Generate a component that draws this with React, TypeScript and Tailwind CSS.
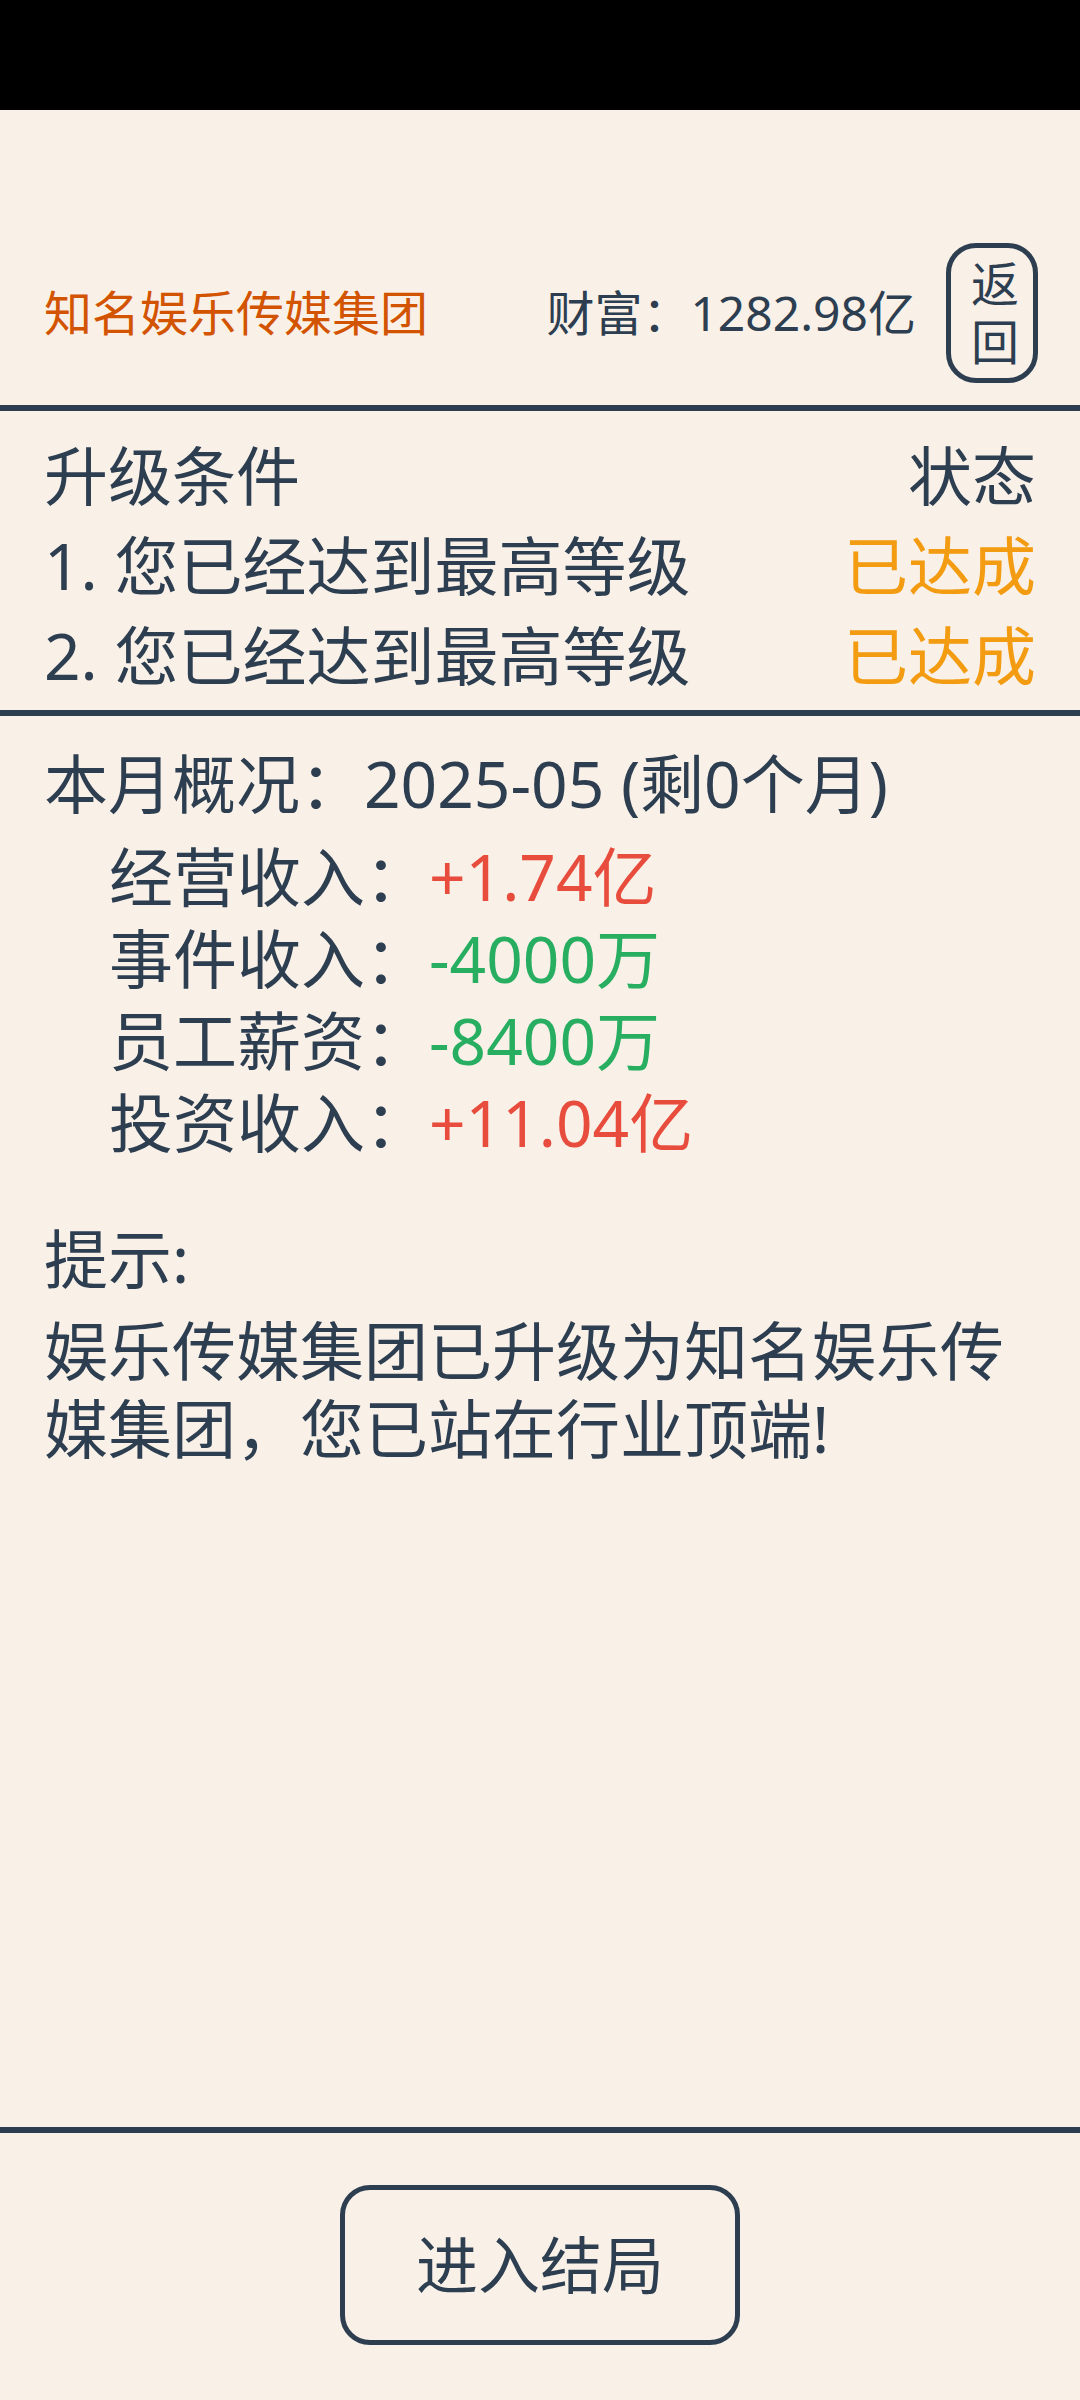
const rows = [
  { label: "经营收入：", value: "+1.74亿", up: true },
  { label: "事件收入：", value: "-4000万", up: false },
  { label: "员工薪资：", value: "-8400万", up: false },
  { label: "投资收入：", value: "+11.04亿", up: true },
];

export default function App() {
  return (
    <div
      className="flex h-[2400px] w-[1080px] flex-col bg-[#f9f0e8] text-[#2c3e50]"
      style={{ fontFamily: '"Noto Sans", "Noto Sans CJK SC", sans-serif' }}
    >
      {/* status bar */}
      <div className="h-[110px] bg-black" />

      {/* header */}
      <div className="flex h-[295px] items-end px-[44px] pb-[22px]">
        <div className="flex w-full items-center">
          <div className="flex-1 text-[48px] leading-none text-[#d35400]">知名娱乐传媒集团</div>
          <div className="text-[48px] leading-none">财富：1282.98亿</div>
          <button className="ml-[30px] mr-[-2px] flex h-[140px] w-[92px] items-center justify-center rounded-[30px] border-[5px] border-[#2c3e50]">
            <span className="pt-[10px] text-[48px] leading-none tracking-[10px] [writing-mode:vertical-rl]">返回</span>
          </button>
        </div>
      </div>

      <div className="h-[6px] bg-[#2c3e50]" />

      {/* upgrade conditions */}
      <div className="px-[44px] pb-[9px] pt-[20px] text-[64px] leading-[90px]">
        <div className="flex justify-between">
          <span>升级条件</span>
          <span>状态</span>
        </div>
        <div className="flex justify-between">
          <span>1. 您已经达到最高等级</span>
          <span className="text-[#f39c12]">已达成</span>
        </div>
        <div className="flex justify-between">
          <span>2. 您已经达到最高等级</span>
          <span className="text-[#f39c12]">已达成</span>
        </div>
      </div>

      <div className="h-[6px] bg-[#2c3e50]" />

      {/* monthly overview */}
      <div className="flex-1 px-[44px] pt-[27px] text-[64px] leading-[82px]">
        <div>本月概况：2025-05 (剩0个月)</div>
        <div className="mt-[11px] pl-[65px]">
          {rows.map((r) => (
            <div key={r.label}>
              {r.label}
              <span className={r.up ? "text-[#e74c3c]" : "text-[#27ae60]"}>{r.value}</span>
            </div>
          ))}
        </div>
        <div className="mt-[54px]">提示:</div>
        <p className="mt-[12px] leading-[78px]">娱乐传媒集团已升级为知名娱乐传媒集团，您已站在行业顶端!</p>
      </div>

      <div className="h-[6px] bg-[#2c3e50]" />

      {/* footer */}
      <div className="flex h-[267px] justify-center pt-[52px]">
        <button className="flex h-[160px] w-[400px] items-center justify-center rounded-[30px] border-[5px] border-[#2c3e50] text-[62px]">
          进入结局
        </button>
      </div>
    </div>
  );
}
